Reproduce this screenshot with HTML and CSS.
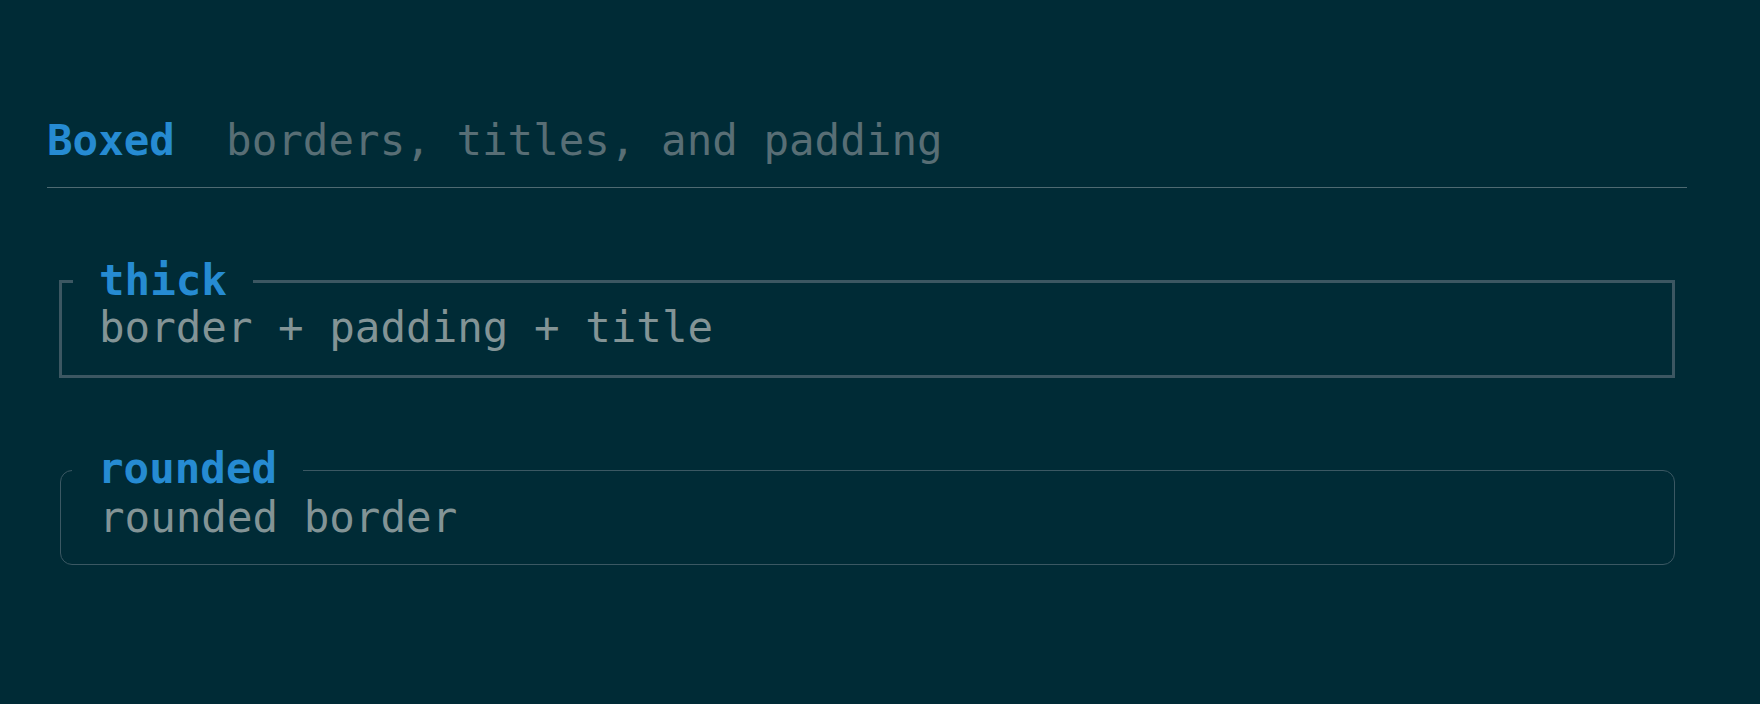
FILE: index.html
```html
<!DOCTYPE html>
<html lang="en">
<head>
<meta charset="utf-8">
<title>Boxed</title>
<link rel="stylesheet" href="styles.css">
</head>
<body>
<main class="page">
  <header class="head">
    <span class="head-title">Boxed</span>
    <span class="head-sub">borders, titles, and padding</span>
  </header>
  <section class="box box-thick">
    <h2 class="box-title">thick</h2>
    <p class="box-body">border + padding + title</p>
  </section>
  <section class="box box-rounded">
    <h2 class="box-title">rounded</h2>
    <p class="box-body">rounded border</p>
  </section>
</main>
</body>
</html>
```
FILE: styles.css
```css
html, body {
  margin: 0;
  padding: 0;
  background: #002b36;
}
body {
  width: 1760px;
  height: 704px;
  overflow: hidden;
  font-family: "DejaVu Sans Mono", "Liberation Mono", monospace;
  font-size: 42.5px;
  line-height: 47px;
}
.page {
  padding: 117px 73px 0 47px;
  display: flex;
  flex-direction: column;
}
.head {
  display: flex;
  gap: 2ch;
  padding-bottom: 23px;
  border-bottom: 1px solid #4e6a72;
}
.head-title {
  color: #268bd2;
  font-weight: bold;
}
.head-sub {
  color: #586e75;
}
.box {
  position: relative;
  margin: 92px 12px 0 12px;
  padding: 21px 20px 24px 37px;
}
.box-thick {
  border: 3px solid #3c5762;
}
.box-rounded {
  margin-top: 92px;
  margin-left: 13px;
  border: 1px solid #3b5863;
  border-radius: 12px;
  padding-top: 23px;
  padding-left: 38px;
  padding-bottom: 23px;
}
.box-title {
  position: absolute;
  top: -26px;
  left: 11px;
  margin: 0;
  padding: 0 26px;
  background: #002b36;
  color: #268bd2;
  font-size: inherit;
  font-weight: bold;
  line-height: 47px;
}
.box-body {
  margin: 0;
  color: #839496;
}
```
